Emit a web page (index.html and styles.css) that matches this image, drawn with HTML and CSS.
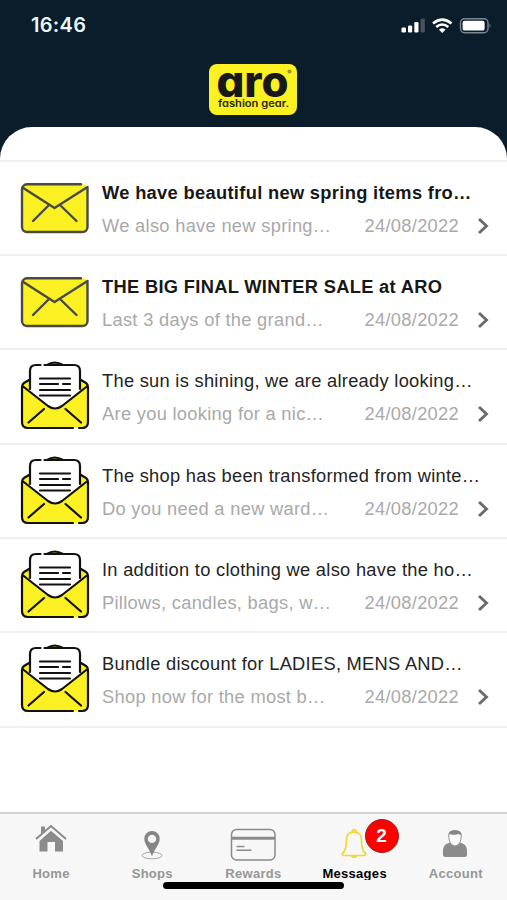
FILE: index.html
```html
<!DOCTYPE html>
<html lang="en">
<head>
<meta charset="utf-8">
<meta name="viewport" content="width=device-width, initial-scale=1">
<title>Messages</title>
<link rel="stylesheet" href="styles.css">
</head>
<body>
<svg class="defs" width="0" height="0" aria-hidden="true">
  <symbol id="closed" viewBox="0 0 70 72">
    <rect x="2" y="11.300" width="65.500" height="47.700" rx="5" fill="#fbf022"/>
    <path d="M61 11.300H7a5 5 0 0 0-5 5V54a5 5 0 0 0 5 5h55.500a5 5 0 0 0 5-5V14L34.500 35 2.500 14.500M29 32 13 48M40 32 56.500 48" fill="none" stroke="#484a43" stroke-width="2.400" stroke-linecap="round" stroke-linejoin="round"/>
  </symbol>
  <symbol id="open" viewBox="0 0 70 72">
    <path d="M27 4Q34.500-1 43 4" fill="#b9ae18" stroke="#111" stroke-width="2.200"/>
    <path d="M10 19 4 22q-2 1.500-2 4v35q0 6 6 6h54q6 0 6-6V26q0-2.500-2-4l-6-3z" fill="#fbf022"/>
    <path d="M19 4h-3q-6 0-6 6v21l18 14q7 5 14 0l18-14V10q0-6-6-6z" fill="#fff"/>
    <path d="M20.500 4H16q-6 0-6 6v18M24.500 4H54q6 0 6 6v18M9 19l-5 3Q2 23.500 2 26v35q0 6 6 6h45M59 67h3q6 0 6-6V26q0-2.500-2-4l-5-3M2.500 25l25.500 20q7 5 14 0l25.500-20M24 48 8.500 61.500M45.500 48 61 61.500M20 17.500h30M20 23h18M43 23h7M20 29h30M20 34.500h30" fill="none" stroke="#111" stroke-width="2.200" stroke-linecap="round" stroke-linejoin="round"/>
  </symbol>
  <symbol id="chevron" viewBox="0 0 12 18"><path d="m2 2 7.500 7L2 16" fill="none" stroke="#6b6b6b" stroke-width="2.900"/></symbol>
</svg>
<div class="screen">
  <header class="header">
    <div class="status">
      <span class="clock">16:46</span>
      <svg class="indicators" width="92" height="18" viewBox="0 0 92 18">
        <g fill="#fff"><rect x="1.500" y="10.500" width="4.500" height="5" rx="1.200"/><rect x="8" y="8.500" width="4.200" height="7" rx="1.200"/><rect x="14.300" y="5" width="4.200" height="10.500" rx="1.200"/><rect x="20.600" y="1.500" width="4.200" height="14" rx="1.200" opacity=".25"/></g>
        <g fill="none" stroke="#fff" stroke-width="2.600"><path d="M33 6.500Q42.200-1.200 51.500 6.500M36.200 10Q42.200 5 48.300 10"/></g>
        <path d="M39 12.700Q42.200 10 45.500 12.700L42.200 16z" fill="#fff"/>
        <rect x="60.500" y="1.700" width="27.500" height="14" rx="4" fill="none" stroke="#7c8790" stroke-width="1.400"/>
        <rect x="62.600" y="3.800" width="22" height="9.800" rx="2.200" fill="#fff"/>
        <path d="M89.500 6.500q2 2.200 0 4.400z" fill="#7c8790"/>
      </svg>
    </div>
    <svg class="logo" width="88" height="51" viewBox="0 0 88 51" role="img" aria-label="aro fashion gear">
      <rect width="88" height="51" rx="8" fill="#fbf022"/>
      <text class="brand" x="7.500" y="32.500" textLength="72" lengthAdjust="spacingAndGlyphs">aro</text>
      <text class="tagline" x="9" y="43" textLength="71" lengthAdjust="spacingAndGlyphs">fashion gear.</text>
      <circle cx="80.500" cy="7.500" r="2" fill="#9b9526"/>
    </svg>
  </header>
  <main class="panel">
    <article class="row unread"><svg class="mail"><use href="#closed"/></svg><div class="content"><h2>We have beautiful new spring items fro…</h2><div class="detail"><p>We also have new spring…</p><time>24/08/2022</time><svg class="chevron"><use href="#chevron"/></svg></div></div></article>
    <article class="row unread"><svg class="mail"><use href="#closed"/></svg><div class="content"><h2>THE BIG FINAL WINTER SALE at ARO</h2><div class="detail"><p>Last 3 days of the grand…</p><time>24/08/2022</time><svg class="chevron"><use href="#chevron"/></svg></div></div></article>
    <article class="row"><svg class="mail"><use href="#open"/></svg><div class="content"><h2>The sun is shining, we are already looking…</h2><div class="detail"><p>Are you looking for a nic…</p><time>24/08/2022</time><svg class="chevron"><use href="#chevron"/></svg></div></div></article>
    <article class="row"><svg class="mail"><use href="#open"/></svg><div class="content"><h2>The shop has been transformed from winte…</h2><div class="detail"><p>Do you need a new ward…</p><time>24/08/2022</time><svg class="chevron"><use href="#chevron"/></svg></div></div></article>
    <article class="row"><svg class="mail"><use href="#open"/></svg><div class="content"><h2>In addition to clothing we also have the ho…</h2><div class="detail"><p>Pillows, candles, bags, w…</p><time>24/08/2022</time><svg class="chevron"><use href="#chevron"/></svg></div></div></article>
    <article class="row"><svg class="mail"><use href="#open"/></svg><div class="content"><h2>Bundle discount for LADIES, MENS AND…</h2><div class="detail"><p>Shop now for the most b…</p><time>24/08/2022</time><svg class="chevron"><use href="#chevron"/></svg></div></div></article>
  </main>
  <nav class="tabs">
    <a class="tab"><svg width="34" height="38" viewBox="0 0 34 38"><path d="M2 16 17 3l15 13" fill="none" stroke="#8b8b8b" stroke-width="2"/><path d="M7 3.500h4v4.500l-4 3.500zM17 7.800 29 18v10.500h-8V19h-7.500v9.500H5.500V18z" fill="#8b8b8b"/></svg><span>Home</span></a>
    <a class="tab"><svg width="34" height="38" viewBox="0 0 34 38"><ellipse cx="17" cy="32.500" rx="10" ry="3.300" fill="none" stroke="#a5a5a5"/><path fill-rule="evenodd" d="M17 8a7.700 7.700 0 0 0-7.700 7.700C9.300 21.500 15 26.500 17 33.500c2-7 7.700-12 7.700-17.800A7.700 7.700 0 0 0 17 8m0 3.700a4.200 4.200 0 1 1 0 8.400 4.200 4.200 0 0 1 0-8.400" fill="#858585"/></svg><span>Shops</span></a>
    <a class="tab"><svg width="48" height="38" viewBox="0 0 48 38"><rect x="2.500" y="6.500" width="43.500" height="30.500" rx="5" fill="none" stroke="#8b8b8b" stroke-width="1.500"/><path d="M2.500 15.300h43.500" stroke="#8b8b8b" stroke-width="3"/><path d="M7.500 23.500h8M7.500 27.300h15" stroke="#8b8b8b" stroke-width="1.400"/></svg><span>Rewards</span></a>
    <a class="tab active"><svg width="34" height="38" viewBox="0 0 34 38"><path d="M17 9C11.500 9 9.500 13 9.500 17c0 7-1 11-4 13.500Q5 32.500 7 32.500h20q2 0 1.500-2c-3-2.500-4-6.500-4-13.500 0-4-2-8-7.500-8zM15 9q0-2.300 2-2.300T19 9M14 32.500q3 4 6 0" fill="none" stroke="#f6d62b" stroke-width="1.700" stroke-linejoin="round"/></svg><span>Messages</span><b class="badge">2</b></a>
    <a class="tab"><svg width="34" height="38" viewBox="0 0 34 38"><path d="M12 19.500C4 21.500 5 27 5 32q0 2 2.500 2h19q2.500 0 2.500-2c0-5 1-10.500-7-12.500q-5 6-10 0z" fill="#8b8b8b"/><path d="M10.700 13q.3 9 6.300 10 6-1 6.300-10" fill="#fafafa" stroke="#999" stroke-width="1"/><path d="M10.300 14Q9.500 7 17 7t6.700 7q-1.200-3.500-4-2.800-6 1.200-8-.2z" fill="#858585"/></svg><span>Account</span></a>
    <div class="home-bar"></div>
  </nav>
</div>
</body>
</html>
```
FILE: styles.css
```css
* { box-sizing: border-box; }
body { margin: 0; font-family: "Liberation Sans", Arial, sans-serif; }
.defs { position: absolute; }
.screen { width: 507px; height: 900px; display: flex; flex-direction: column; background: #0b1d2a; overflow: hidden; }
.header { height: 127px; display: flex; flex-direction: column; align-items: center; }
.status { width: 100%; height: 64px; padding: 13px 15px 0 31px; display: flex; justify-content: space-between; align-items: flex-start; }
.clock { font: 600 20px/24px Inter, sans-serif; letter-spacing: .3px; color: #eaf7fb; }
.indicators { margin-top: 4px; }
.logo { display: block; overflow: visible; margin-right: 2px; }
.brand { font: 800 43px Inter, sans-serif; font-feature-settings: "cv11"; fill: #171819; }
.tagline { font: 600 10px Inter, sans-serif; font-feature-settings: "cv11"; fill: #252515; }
.panel { flex: 1; padding-top: 32.700px; border-radius: 32px 32px 0 0; background: #fff; }
.row { height: 94.350px; padding-left: 20px; display: flex; align-items: flex-start; border-top: 2px solid #f0f0f0; }
.row:last-child { height: 96.200px; border-bottom: 2px solid #f0f0f0; }
.mail { width: 70px; height: 72px; margin-top: 11px; flex: none; }
.content { flex: 1; padding: 19px 16px 0 12px; }
h2 { margin: 0; font-size: 18.300px; line-height: 24px; font-weight: 400; letter-spacing: .28px; color: #242424; white-space: nowrap; }
.unread h2 { font-weight: 700; letter-spacing: .32px; color: #171717; }
.detail { display: grid; grid-template-columns: 262.500px 1fr 14px; align-items: center; margin-top: 9px; font-size: 18.300px; line-height: 24px; letter-spacing: .3px; color: #a9a9a9; }
p { margin: 0; white-space: nowrap; }
.chevron { width: 12px; height: 18px; }
.tabs { position: relative; height: 88px; display: grid; grid-template-columns: repeat(5, 101.200px); background: #f7f7f7; border-top: 2px solid #d2d2d2; }
.tab { position: relative; display: flex; flex-direction: column; align-items: center; padding-top: 9px; color: #969696; font-size: 13px; font-weight: 700; line-height: 18px; letter-spacing: .3px; }
.tab span { height: 15px; margin: 4px 0 0 1px; overflow: hidden; }
.active { color: #000; }
.badge { position: absolute; left: 61px; top: 5px; width: 34px; height: 34px; border: 1px solid #9d2020; border-radius: 50%; background: #fd0000; color: #fff; font-size: 19px; line-height: 32px; text-align: center; letter-spacing: 0; }
.home-bar { position: absolute; left: 163px; top: 68px; width: 181px; height: 7px; border-radius: 4px; background: #000; }
```
